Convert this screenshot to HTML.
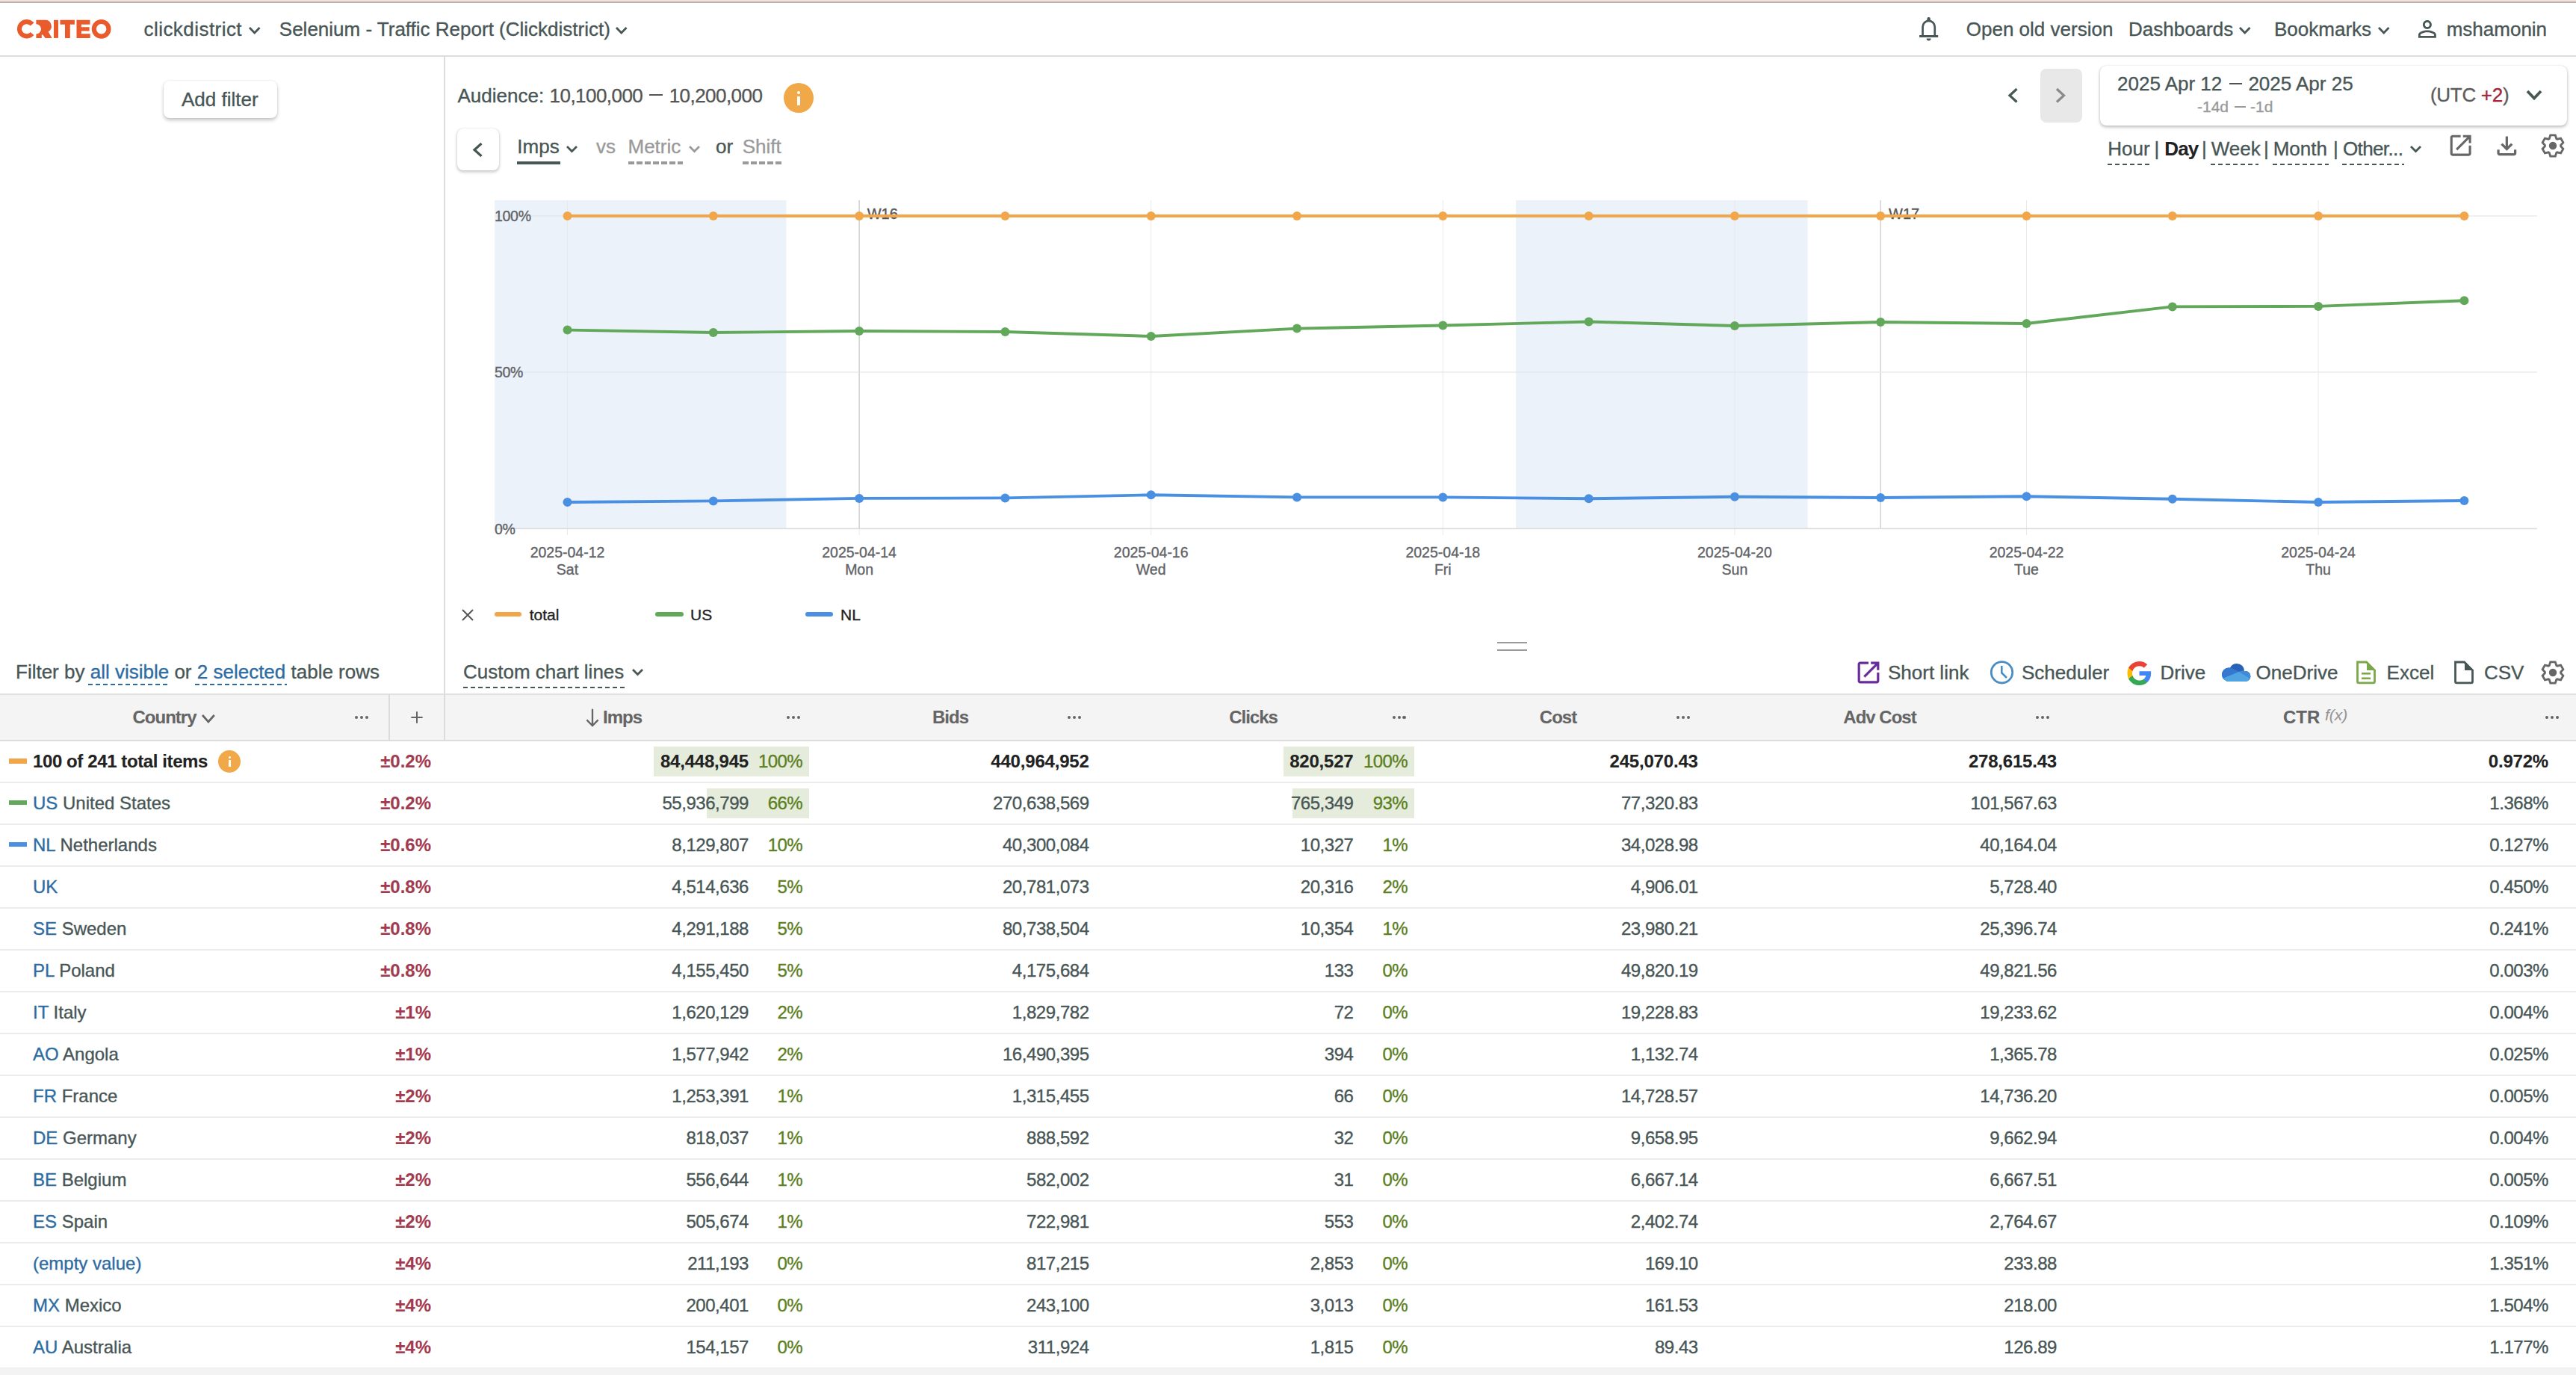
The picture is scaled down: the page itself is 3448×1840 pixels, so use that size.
<!DOCTYPE html>
<html><head><meta charset="utf-8"><title>Criteo report</title>
<style>
html,body{margin:0;padding:0;background:#fff;}
body{width:3448px;height:1840px;overflow:hidden;position:relative;font-family:"Liberation Sans",sans-serif;}
.t{position:absolute;white-space:nowrap;-webkit-text-stroke:0.35px currentColor;}
.r{position:absolute;}
b{font-weight:700}
@media (max-width: 2600px) { html{zoom:0.5;} }
</style></head><body>
<div class="r" style="left:0.00px;top:0.00px;width:3448.00px;height:2.00px;background:#f3e3dd;"></div><div class="r" style="left:0.00px;top:2.00px;width:3448.00px;height:2.00px;background:#bdb1ad;"></div><div class="r" style="left:0.00px;top:74.00px;width:3448.00px;height:2.00px;background:#dcdcdc;"></div><svg class="r" style="left:0.00px;top:0.00px" width="160" height="76" viewBox="0 0 160 76"><path fill="#e95b2a" d="M45.4,30.6 A12.7,12.7 0 1 0 45.4,46.9 L40.7,42.9 A6.6,6.6 0 1 1 40.7,34.6 Z"/><path fill="#e95b2a" d="M48.4,26.8 H60 A8.3,8.3 0 0 1 64.6,42.3 L69.6,50.9 H60.6 L57.4,46.6 H55.8 V50.9 H48.4 V45.5 A6.65,6.65 0 0 0 48.4,32.2 Z"/><rect fill="#e95b2a" x="72" y="26.8" width="6" height="24.1"/><path fill="#e95b2a" d="M80.5,26.8 H99.9 V32.8 H93.8 V50.9 H87 V32.8 H80.5 Z"/><path fill="#e95b2a" d="M102.5,26.8 H120.5 V32.8 H108.9 V36.3 H119.6 V41.5 H108.9 V45.3 H120.7 V50.9 H102.5 Z"/><path fill="#e95b2a" fill-rule="evenodd" d="M135.65,25.9 A12.9,12.9 0 1 1 135.65,51.7 A12.9,12.9 0 1 1 135.65,25.9 Z M135.65,32.1 A6.75,6.75 0 1 0 135.65,45.6 A6.75,6.75 0 1 0 135.65,32.1 Z"/></svg><div class="t" style="top:25.99px;font-size:26px;line-height:26px;color:#485656;letter-spacing:0.45px;left:192.50px;">clickdistrict</div><svg class="r" style="left:330.95px;top:33.80px" width="19.5" height="13" viewBox="0 0 19.5 13"><polyline points="3,3 9.75,10 16.5,3" fill="none" stroke="#485656" stroke-width="2.8" /></svg><div class="t" style="top:25.99px;font-size:26px;line-height:26px;color:#485656;left:373.80px;">Selenium - Traffic Report (Clickdistrict)</div><svg class="r" style="left:821.95px;top:33.80px" width="19.5" height="13" viewBox="0 0 19.5 13"><polyline points="3,3 9.75,10 16.5,3" fill="none" stroke="#485656" stroke-width="2.8" /></svg><svg class="r" style="left:2560.00px;top:15.00px" width="50" height="50" viewBox="2560 15 50 50"><rect x="2569.1" y="47" width="25.1" height="3" fill="#485656"/><path d="M2573.55,47.5 V36 A8.1,8.1 0 0 1 2589.75,36 V47.5" fill="none" stroke="#485656" stroke-width="2.7"/><rect x="2579.4" y="23" width="4.4" height="6" rx="2" fill="#485656"/><path d="M2578.6,51.5 H2584.6 A3,3 0 0 1 2578.6,51.5 Z" fill="#485656"/></svg><div class="t" style="top:25.79px;font-size:26px;line-height:26px;color:#485656;left:2631.80px;">Open old version</div><div class="t" style="top:25.79px;font-size:26px;line-height:26px;color:#485656;left:2849.00px;">Dashboards</div><svg class="r" style="left:2994.55px;top:33.80px" width="19.5" height="13" viewBox="0 0 19.5 13"><polyline points="3,3 9.75,10 16.5,3" fill="none" stroke="#485656" stroke-width="2.8" /></svg><div class="t" style="top:25.79px;font-size:26px;line-height:26px;color:#485656;left:3044.00px;">Bookmarks</div><svg class="r" style="left:3180.75px;top:33.80px" width="19.5" height="13" viewBox="0 0 19.5 13"><polyline points="3,3 9.75,10 16.5,3" fill="none" stroke="#485656" stroke-width="2.8" /></svg><svg class="r" style="left:3231px;top:21px" width="35.8" height="35.8" viewBox="0 0 24 24"><path fill="#485656" d="M12 5.9c1.16 0 2.1.94 2.1 2.1s-.94 2.1-2.1 2.1S9.9 9.16 9.9 8s.94-2.1 2.1-2.1m0 9c2.97 0 6.1 1.46 6.1 2.1v1.1H5.9V17c0-.64 3.13-2.1 6.1-2.1M12 4C9.79 4 8 5.79 8 8s1.79 4 4 4 4-1.79 4-4-1.79-4-4-4zm0 9c-2.67 0-8 1.34-8 4v3h16v-3c0-2.66-5.33-4-8-4z"/></svg><div class="t" style="top:25.79px;font-size:26px;line-height:26px;color:#485656;left:3274.70px;">mshamonin</div><div class="r" style="left:594.00px;top:76.00px;width:2.00px;height:915.00px;background:#dcdcdc;"></div><div class="r" style="left:219px;top:108px;width:152px;height:50px;border-radius:8px;background:#fff;box-shadow:0 3px 5px rgba(0,0,0,0.22),0 0 2px rgba(0,0,0,0.12)"></div><div class="t" style="top:119.69px;font-size:26px;line-height:26px;color:#485656;left:243.00px;">Add filter</div><div class="t" style="top:114.99px;font-size:26px;line-height:26px;color:#485656;left:612.50px;">Audience:</div><div class="t" style="top:114.99px;font-size:26px;line-height:26px;color:#555;letter-spacing:-0.55px;left:735.60px;">10,100,000</div><div class="r" style="left:869.20px;top:126.30px;width:17.50px;height:2.00px;background:#555;"></div><div class="t" style="top:114.99px;font-size:26px;line-height:26px;color:#555;letter-spacing:-0.55px;left:895.70px;">10,200,000</div><div class="r" style="left:1049px;top:111px;width:40px;height:40px;border-radius:50%;background:#f0a848"></div><div class="r" style="left:1067px;top:122px;width:4px;height:4px;border-radius:2px;background:#fff"></div><div class="r" style="left:1067.00px;top:129.00px;width:4.00px;height:12.00px;background:#fff;"></div><div class="r" style="left:612px;top:172px;width:56px;height:56px;border-radius:8px;background:#fff;box-shadow:0 2px 4px rgba(0,0,0,0.25),0 0 1px rgba(0,0,0,0.2)"></div><svg class="r" style="left:631.85px;top:188.50px" width="15.5" height="23" viewBox="0 0 15.5 23"><polyline points="12.5,3 3,11.5 12.5,20" fill="none" stroke="#485656" stroke-width="3.2" /></svg><div class="t" style="top:182.99px;font-size:26px;line-height:26px;color:#485656;left:692.30px;">Imps</div><div class="r" style="left:692.00px;top:216.00px;width:58.00px;height:4.00px;background:#485656;"></div><svg class="r" style="left:756.30px;top:193.35px" width="19" height="12.5" viewBox="0 0 19 12.5"><polyline points="3,3 9.5,9.5 16,3" fill="none" stroke="#485656" stroke-width="2.8" /></svg><div class="t" style="top:182.99px;font-size:26px;line-height:26px;color:#9a9a9a;left:798.00px;">vs</div><div class="t" style="top:182.99px;font-size:26px;line-height:26px;color:#9a9a9a;left:840.50px;">Metric</div><div class="r" style="left:840.50px;top:216.00px;width:73.50px;height:4px;background:repeating-linear-gradient(90deg,#9a9a9a 0 8px,transparent 8px 11px)"></div><svg class="r" style="left:920.30px;top:193.35px" width="19" height="12.5" viewBox="0 0 19 12.5"><polyline points="3,3 9.5,9.5 16,3" fill="none" stroke="#9a9a9a" stroke-width="2.8" /></svg><div class="t" style="top:182.99px;font-size:26px;line-height:26px;color:#485656;left:958.00px;">or</div><div class="t" style="top:182.99px;font-size:26px;line-height:26px;color:#9a9a9a;left:993.70px;">Shift</div><div class="r" style="left:993.70px;top:216.00px;width:52.30px;height:4px;background:repeating-linear-gradient(90deg,#9a9a9a 0 8px,transparent 8px 11px)"></div><svg class="r" style="left:2686.75px;top:116.25px" width="15.5" height="23.5" viewBox="0 0 15.5 23.5"><polyline points="12.5,3 3,11.75 12.5,20.5" fill="none" stroke="#485656" stroke-width="3.2" /></svg><div class="r" style="left:2731px;top:92px;width:56px;height:72px;border-radius:8px;background:#e8e8e8"></div><svg class="r" style="left:2750.25px;top:116.25px" width="15.5" height="23.5" viewBox="0 0 15.5 23.5"><polyline points="3,3 12.5,11.75 3,20.5" fill="none" stroke="#878b8b" stroke-width="3.2" /></svg><div class="r" style="left:2811px;top:88px;width:625px;height:80px;border-radius:8px;background:#fff;box-shadow:0 2px 4px rgba(0,0,0,0.28),0 0 1px rgba(0,0,0,0.18)"></div><div class="t" style="top:98.99px;font-size:26px;line-height:26px;color:#485656;left:2834.00px;">2025 Apr 12</div><div class="r" style="left:2983.70px;top:110.80px;width:17.10px;height:2.00px;background:#485656;"></div><div class="t" style="top:98.99px;font-size:26px;line-height:26px;color:#485656;left:3009.40px;">2025 Apr 25</div><div class="t" style="top:132.22px;font-size:21px;line-height:21px;color:#9a9a9a;left:2941.00px;">-14d</div><div class="r" style="left:2991.00px;top:142.00px;width:14.50px;height:1.60px;background:#9a9a9a;"></div><div class="t" style="top:132.22px;font-size:21px;line-height:21px;color:#9a9a9a;left:3012.00px;">-1d</div><div class="t" style="top:113.79px;font-size:26px;line-height:26px;color:#5c5c5c;letter-spacing:-0.3px;left:3253.00px;">(UTC <span style="color:#a3253a">+2</span>)</div><svg class="r" style="left:3380.00px;top:119.25px" width="24" height="15.5" viewBox="0 0 24 15.5"><polyline points="3,3 12.0,12.5 21,3" fill="none" stroke="#485656" stroke-width="3.8" /></svg><div class="t" style="top:185.69px;font-size:26px;line-height:26px;color:#485656;left:2821.20px;">Hour</div><div class="t" style="top:185.69px;font-size:26px;line-height:26px;color:#485656;left:2883.50px;">|</div><div class="t" style="top:185.69px;font-size:26px;line-height:26px;color:#485656;left:2947.00px;">|</div><div class="t" style="top:185.69px;font-size:26px;line-height:26px;color:#485656;left:2959.80px;">Week</div><div class="t" style="top:185.69px;font-size:26px;line-height:26px;color:#485656;left:3029.90px;">|</div><div class="t" style="top:185.69px;font-size:26px;line-height:26px;color:#485656;left:3042.70px;">Month</div><div class="t" style="top:185.69px;font-size:26px;line-height:26px;color:#485656;left:3123.10px;">|</div><div class="t" style="top:185.69px;font-size:26px;line-height:26px;color:#485656;letter-spacing:-0.6px;left:3135.90px;">Other...</div><div class="t" style="top:185.69px;font-size:26px;line-height:26px;color:#222;font-weight:700;-webkit-text-stroke:0.1px currentColor;letter-spacing:-0.8px;left:2897.20px;">Day</div><div class="r" style="left:2821.00px;top:218.80px;width:56.00px;height:2px;background:repeating-linear-gradient(90deg,#485656 0 6px,transparent 6px 10px)"></div><div class="r" style="left:2959.00px;top:218.80px;width:64.00px;height:2px;background:repeating-linear-gradient(90deg,#485656 0 6px,transparent 6px 10px)"></div><div class="r" style="left:3042.00px;top:218.80px;width:75.00px;height:2px;background:repeating-linear-gradient(90deg,#485656 0 6px,transparent 6px 10px)"></div><div class="r" style="left:3135.00px;top:218.80px;width:83.00px;height:2px;background:repeating-linear-gradient(90deg,#485656 0 6px,transparent 6px 10px)"></div><svg class="r" style="left:3224.30px;top:193.25px" width="19" height="12.5" viewBox="0 0 19 12.5"><polyline points="3,3 9.5,9.5 16,3" fill="none" stroke="#485656" stroke-width="2.8" /></svg><svg class="r" style="left:3274.5px;top:176px" width="37.3" height="37.3" viewBox="0 0 24 24"><path fill="#666666" d="M19 19H5V5h7V3H5c-1.11 0-2 .9-2 2v14c0 1.1.89 2 2 2h14c1.1 0 2-.9 2-2v-7h-2v7zM14 3v2h3.59l-9.83 9.83 1.41 1.41L19 6.41V10h2V3h-7z"/></svg><svg class="r" style="left:3335.5px;top:175.5px" width="38.7" height="38.7" viewBox="0 -960 960 960"><path fill="#666666" d="M480-320 280-520l56-58 104 104v-326h80v326l104-104 56 58-200 200ZM240-160q-33 0-56.5-23.5T160-240v-120h80v120h480v-120h80v120q0 33-23.5 56.5T720-160H240Z"/></svg><svg class="r" style="left:3397.00px;top:175.00px" width="40" height="40" viewBox="0 0 40 40"><path d="M15.27,10.51 L16.73,5.87 L23.27,5.87 L24.73,10.51 L25.85,11.16 L30.60,10.10 L33.87,15.77 L30.58,19.35 L30.58,20.65 L33.87,24.23 L30.60,29.90 L25.85,28.84 L24.73,29.49 L23.27,34.13 L16.73,34.13 L15.27,29.49 L14.15,28.84 L9.40,29.90 L6.13,24.23 L9.42,20.65 L9.42,19.35 L6.13,15.77 L9.40,10.10 L14.15,11.16 Z" fill="none" stroke="#666666" stroke-width="2.8" stroke-linejoin="miter"/><circle cx="20" cy="20" r="5.2" fill="#666666"/></svg><svg class="r" style="left:0.00px;top:0.00px" width="3448" height="900" viewBox="0 0 3448 900"><rect x="662" y="268" width="390.4" height="439.4" fill="#ebf2fa"/><rect x="2029" y="268" width="390.6" height="439.4" fill="#ebf2fa"/><rect x="759.00" y="268" width="1" height="448" fill="#e8e9eb"/><rect x="1149.60" y="268" width="1" height="448" fill="#e8e9eb"/><rect x="1540.20" y="268" width="1" height="448" fill="#e8e9eb"/><rect x="1930.80" y="268" width="1" height="448" fill="#e8e9eb"/><rect x="2321.40" y="268" width="1" height="448" fill="#e8e9eb"/><rect x="2712.00" y="268" width="1" height="448" fill="#e8e9eb"/><rect x="3102.60" y="268" width="1" height="448" fill="#e8e9eb"/><rect x="1149.50" y="268" width="1.2" height="439.5" fill="#c9c9c9"/><rect x="2516.60" y="268" width="1.2" height="439.5" fill="#c9c9c9"/><rect x="662" y="288.4" width="2734" height="1.2" fill="#e4e6e8"/><rect x="662" y="497.4" width="2734" height="1.2" fill="#e4e6e8"/><rect x="662" y="706.6" width="2734" height="1.6" fill="#dcdcdc"/></svg><div class="t" style="top:275.87px;font-size:20px;line-height:20px;color:#555;left:1160.70px;">W16</div><div class="t" style="top:275.87px;font-size:20px;line-height:20px;color:#555;left:2528.00px;">W17</div><svg class="r" style="left:0.00px;top:0.00px" width="3448" height="900" viewBox="0 0 3448 900"><polyline points="759.5,672.0 954.8,670.4 1150.1,666.9 1345.4,666.4 1540.7,662.3 1736.0,665.4 1931.3,665.4 2126.6,667.2 2321.9,664.8 2517.2,666.0 2712.5,664.2 2907.8,667.8 3103.1,672.0 3298.4,670.0" fill="none" stroke="#4a90e2" stroke-width="3.9" stroke-linejoin="round"/><circle cx="759.5" cy="672.0" r="6" fill="#4a90e2"/><circle cx="954.8" cy="670.4" r="6" fill="#4a90e2"/><circle cx="1150.1" cy="666.9" r="6" fill="#4a90e2"/><circle cx="1345.4" cy="666.4" r="6" fill="#4a90e2"/><circle cx="1540.7" cy="662.3" r="6" fill="#4a90e2"/><circle cx="1736.0" cy="665.4" r="6" fill="#4a90e2"/><circle cx="1931.3" cy="665.4" r="6" fill="#4a90e2"/><circle cx="2126.6" cy="667.2" r="6" fill="#4a90e2"/><circle cx="2321.9" cy="664.8" r="6" fill="#4a90e2"/><circle cx="2517.2" cy="666.0" r="6" fill="#4a90e2"/><circle cx="2712.5" cy="664.2" r="6" fill="#4a90e2"/><circle cx="2907.8" cy="667.8" r="6" fill="#4a90e2"/><circle cx="3103.1" cy="672.0" r="6" fill="#4a90e2"/><circle cx="3298.4" cy="670.0" r="6" fill="#4a90e2"/><polyline points="759.5,441.6 954.8,445.0 1150.1,443.0 1345.4,444.0 1540.7,450.0 1736.0,439.6 1931.3,435.5 2126.6,430.5 2321.9,436.0 2517.2,431.0 2712.5,433.0 2907.8,410.4 3103.1,409.9 3298.4,402.3" fill="none" stroke="#62a85a" stroke-width="3.9" stroke-linejoin="round"/><circle cx="759.5" cy="441.6" r="6" fill="#62a85a"/><circle cx="954.8" cy="445.0" r="6" fill="#62a85a"/><circle cx="1150.1" cy="443.0" r="6" fill="#62a85a"/><circle cx="1345.4" cy="444.0" r="6" fill="#62a85a"/><circle cx="1540.7" cy="450.0" r="6" fill="#62a85a"/><circle cx="1736.0" cy="439.6" r="6" fill="#62a85a"/><circle cx="1931.3" cy="435.5" r="6" fill="#62a85a"/><circle cx="2126.6" cy="430.5" r="6" fill="#62a85a"/><circle cx="2321.9" cy="436.0" r="6" fill="#62a85a"/><circle cx="2517.2" cy="431.0" r="6" fill="#62a85a"/><circle cx="2712.5" cy="433.0" r="6" fill="#62a85a"/><circle cx="2907.8" cy="410.4" r="6" fill="#62a85a"/><circle cx="3103.1" cy="409.9" r="6" fill="#62a85a"/><circle cx="3298.4" cy="402.3" r="6" fill="#62a85a"/><polyline points="759.5,289.0 954.8,289.0 1150.1,289.0 1345.4,289.0 1540.7,289.0 1736.0,289.0 1931.3,289.0 2126.6,289.0 2321.9,289.0 2517.2,289.0 2712.5,289.0 2907.8,289.0 3103.1,289.0 3298.4,289.0" fill="none" stroke="#f2a64a" stroke-width="3.9" stroke-linejoin="round"/><circle cx="759.5" cy="289.0" r="6" fill="#f2a64a"/><circle cx="954.8" cy="289.0" r="6" fill="#f2a64a"/><circle cx="1150.1" cy="289.0" r="6" fill="#f2a64a"/><circle cx="1345.4" cy="289.0" r="6" fill="#f2a64a"/><circle cx="1540.7" cy="289.0" r="6" fill="#f2a64a"/><circle cx="1736.0" cy="289.0" r="6" fill="#f2a64a"/><circle cx="1931.3" cy="289.0" r="6" fill="#f2a64a"/><circle cx="2126.6" cy="289.0" r="6" fill="#f2a64a"/><circle cx="2321.9" cy="289.0" r="6" fill="#f2a64a"/><circle cx="2517.2" cy="289.0" r="6" fill="#f2a64a"/><circle cx="2712.5" cy="289.0" r="6" fill="#f2a64a"/><circle cx="2907.8" cy="289.0" r="6" fill="#f2a64a"/><circle cx="3103.1" cy="289.0" r="6" fill="#f2a64a"/><circle cx="3298.4" cy="289.0" r="6" fill="#f2a64a"/></svg><div class="t" style="top:279.99px;font-size:19.5px;line-height:19.5px;color:#5f6368;letter-spacing:-0.3px;left:662.00px;">100%</div><div class="t" style="top:489.49px;font-size:19.5px;line-height:19.5px;color:#5f6368;letter-spacing:-0.3px;left:662.00px;">50%</div><div class="t" style="top:698.99px;font-size:19.5px;line-height:19.5px;color:#5f6368;letter-spacing:-0.3px;left:662.00px;">0%</div><div class="t" style="top:730.29px;font-size:19.5px;line-height:19.5px;color:#5f6368;left:159.50px;width:1200px;text-align:center;">2025-04-12</div><div class="t" style="top:753.49px;font-size:19.5px;line-height:19.5px;color:#5f6368;left:159.50px;width:1200px;text-align:center;">Sat</div><div class="t" style="top:730.29px;font-size:19.5px;line-height:19.5px;color:#5f6368;left:550.10px;width:1200px;text-align:center;">2025-04-14</div><div class="t" style="top:753.49px;font-size:19.5px;line-height:19.5px;color:#5f6368;left:550.10px;width:1200px;text-align:center;">Mon</div><div class="t" style="top:730.29px;font-size:19.5px;line-height:19.5px;color:#5f6368;left:940.70px;width:1200px;text-align:center;">2025-04-16</div><div class="t" style="top:753.49px;font-size:19.5px;line-height:19.5px;color:#5f6368;left:940.70px;width:1200px;text-align:center;">Wed</div><div class="t" style="top:730.29px;font-size:19.5px;line-height:19.5px;color:#5f6368;left:1331.30px;width:1200px;text-align:center;">2025-04-18</div><div class="t" style="top:753.49px;font-size:19.5px;line-height:19.5px;color:#5f6368;left:1331.30px;width:1200px;text-align:center;">Fri</div><div class="t" style="top:730.29px;font-size:19.5px;line-height:19.5px;color:#5f6368;left:1721.90px;width:1200px;text-align:center;">2025-04-20</div><div class="t" style="top:753.49px;font-size:19.5px;line-height:19.5px;color:#5f6368;left:1721.90px;width:1200px;text-align:center;">Sun</div><div class="t" style="top:730.29px;font-size:19.5px;line-height:19.5px;color:#5f6368;left:2112.50px;width:1200px;text-align:center;">2025-04-22</div><div class="t" style="top:753.49px;font-size:19.5px;line-height:19.5px;color:#5f6368;left:2112.50px;width:1200px;text-align:center;">Tue</div><div class="t" style="top:730.29px;font-size:19.5px;line-height:19.5px;color:#5f6368;left:2503.10px;width:1200px;text-align:center;">2025-04-24</div><div class="t" style="top:753.49px;font-size:19.5px;line-height:19.5px;color:#5f6368;left:2503.10px;width:1200px;text-align:center;">Thu</div><svg class="r" style="left:616.00px;top:813.00px" width="20" height="20" viewBox="0 0 20 20"><path d="M3,3 L17,17 M17,3 L3,17" stroke="#555" stroke-width="2"/></svg><div class="r" style="left:662px;top:819px;width:36px;height:6px;border-radius:3px;background:#f2a64a"></div><div class="t" style="top:811.52px;font-size:21px;line-height:21px;color:#222;left:708.70px;">total</div><div class="r" style="left:877px;top:819px;width:38px;height:6px;border-radius:3px;background:#62a85a"></div><div class="t" style="top:811.52px;font-size:21px;line-height:21px;color:#222;left:924.00px;">US</div><div class="r" style="left:1078px;top:819px;width:37px;height:6px;border-radius:3px;background:#4a90e2"></div><div class="t" style="top:811.52px;font-size:21px;line-height:21px;color:#222;left:1125.00px;">NL</div><div class="r" style="left:2004.00px;top:859.00px;width:40.00px;height:1.50px;background:#9a9a9a;"></div><div class="r" style="left:2004.00px;top:869.00px;width:40.00px;height:1.50px;background:#9a9a9a;"></div><div class="t" style="top:885.99px;font-size:26px;line-height:26px;color:#485656;left:21.00px;">Filter by <span style="color:#2d6ca2">all visible</span> or <span style="color:#2d6ca2">2 selected</span> table rows</div><div class="r" style="left:118.00px;top:915.00px;width:106.00px;height:2px;background:repeating-linear-gradient(90deg,#2d6ca2 0 6px,transparent 6px 10px)"></div><div class="r" style="left:261.00px;top:915.00px;width:122.50px;height:2px;background:repeating-linear-gradient(90deg,#2d6ca2 0 6px,transparent 6px 10px)"></div><div class="t" style="top:885.99px;font-size:26px;line-height:26px;color:#485656;left:620.00px;">Custom chart lines</div><div class="r" style="left:620.00px;top:918.50px;width:218.00px;height:2px;background:repeating-linear-gradient(90deg,#485656 0 6px,transparent 6px 10px)"></div><svg class="r" style="left:843.80px;top:893.25px" width="19" height="12.5" viewBox="0 0 19 12.5"><polyline points="3,3 9.5,9.5 16,3" fill="none" stroke="#485656" stroke-width="2.8" /></svg><svg class="r" style="left:2481.00px;top:880.00px" width="40" height="40" viewBox="0 0 40 40"><g transform="translate(20,20) scale(1.6) translate(-12,-12)"><path fill="#6a2c9c" d="M19 19H5V5h7V3H5c-1.11 0-2 .9-2 2v14c0 1.1.89 2 2 2h14c1.1 0 2-.9 2-2v-7h-2v7zM14 3v2h3.59l-9.83 9.83 1.41 1.41L19 6.41V10h2V3h-7z"/></g></svg><div class="t" style="top:886.99px;font-size:26px;line-height:26px;color:#485656;left:2527.00px;">Short link</div><svg class="r" style="left:2660.00px;top:880.00px" width="40" height="40" viewBox="0 0 40 40"><circle cx="19.5" cy="19.8" r="14.2" fill="none" stroke="#4a8cc4" stroke-width="2.8"/><polyline points="19.3,11 19.3,20.5 26,27" fill="none" stroke="#4a8cc4" stroke-width="2.6"/></svg><div class="t" style="top:886.99px;font-size:26px;line-height:26px;color:#485656;left:2706.00px;">Scheduler</div><svg class="r" style="left:0.00px;top:0.00px" width="3448" height="1000" viewBox="0 0 3448 1000"><g transform="translate(2847.5,885) scale(0.667)"><path fill="#4285F4" d="M47.5 24.5c0-1.6-.1-3.1-.4-4.5H24v8.5h13.2c-.6 3-2.3 5.6-4.9 7.3v6h7.9c4.6-4.2 7.3-10.5 7.3-17.3z"/><path fill="#34A853" d="M24 48c6.5 0 12-2.2 16-5.9l-7.9-6c-2.2 1.5-5 2.3-8.1 2.3-6.3 0-11.6-4.2-13.5-9.9H2.3v6.2C6.3 42.6 14.5 48 24 48z"/><path fill="#FBBC05" d="M10.5 28.5c-.5-1.5-.8-3-.8-4.5s.3-3.1.8-4.5v-6.2H2.3C.8 16.4 0 20.1 0 24s.8 7.6 2.3 10.7l8.2-6.2z"/><path fill="#EA4335" d="M24 9.5c3.5 0 6.7 1.2 9.2 3.6l6.9-6.9C35.9 2.4 30.5 0 24 0 14.5 0 6.3 5.4 2.3 13.3l8.2 6.2C12.4 13.7 17.7 9.5 24 9.5z"/></g></svg><div class="t" style="top:886.99px;font-size:26px;line-height:26px;color:#485656;left:2891.50px;">Drive</div><svg class="r" style="left:0.00px;top:0.00px" width="3448" height="1000" viewBox="0 0 3448 1000"><defs><clipPath id="odc"><circle cx="2983" cy="902.6" r="9"/><circle cx="2994" cy="898" r="10.1"/><circle cx="3005.5" cy="905" r="6.9"/><rect x="2980" y="900" width="26" height="11.9"/></clipPath></defs><g clip-path="url(#odc)"><rect x="2960" y="880" width="60" height="40" fill="#2962b8"/><polygon points="2960,881.2 2997,898.8 2960,914" fill="#3478d0"/><polygon points="2997,898.8 3020,892.9 3020,912.9" fill="#3f8cd8"/><polygon points="2960,914 2997,898.8 3020,912.9 3020,920 2960,920" fill="#50a4e2"/></g></svg><div class="t" style="top:886.99px;font-size:26px;line-height:26px;color:#485656;left:3019.60px;">OneDrive</div><svg class="r" style="left:0.00px;top:0.00px" width="3448" height="1000" viewBox="0 0 3448 1000"><path d="M3155.5,886 H3167.5 L3178.5,897 V912 A1.8,1.8 0 0 1 3176.7,913.8 H3157.3 A1.8,1.8 0 0 1 3155.5,912 Z" fill="none" stroke="#7aa84a" stroke-width="2.8"/><path d="M3168,885 L3180,897 H3168 Z" fill="#7aa84a"/><rect x="3161" y="900" width="12" height="2.6" fill="#7aa84a"/><rect x="3161" y="906.5" width="12" height="2.6" fill="#7aa84a"/></svg><div class="t" style="top:886.99px;font-size:26px;line-height:26px;color:#485656;left:3194.60px;">Excel</div><svg class="r" style="left:0.00px;top:0.00px" width="3448" height="1000" viewBox="0 0 3448 1000"><path d="M3286.5,886 H3298.5 L3309.5,897 V912 A1.8,1.8 0 0 1 3307.7,913.8 H3288.3 A1.8,1.8 0 0 1 3286.5,912 Z" fill="none" stroke="#485656" stroke-width="2.8"/><path d="M3299,885 L3311,897 H3299 Z" fill="#485656"/></svg><div class="t" style="top:886.99px;font-size:26px;line-height:26px;color:#485656;left:3325.00px;">CSV</div><svg class="r" style="left:3397.00px;top:879.50px" width="40" height="40" viewBox="0 0 40 40"><path d="M15.27,10.51 L16.73,5.87 L23.27,5.87 L24.73,10.51 L25.85,11.16 L30.60,10.10 L33.87,15.77 L30.58,19.35 L30.58,20.65 L33.87,24.23 L30.60,29.90 L25.85,28.84 L24.73,29.49 L23.27,34.13 L16.73,34.13 L15.27,29.49 L14.15,28.84 L9.40,29.90 L6.13,24.23 L9.42,20.65 L9.42,19.35 L6.13,15.77 L9.40,10.10 L14.15,11.16 Z" fill="none" stroke="#666666" stroke-width="2.8" stroke-linejoin="miter"/><circle cx="20" cy="20" r="5.2" fill="#666666"/></svg><div class="r" style="left:0.00px;top:929.00px;width:3448.00px;height:62.00px;background:#f4f4f4;"></div><div class="r" style="left:0.00px;top:928.00px;width:3448.00px;height:2.00px;background:#e0e0e0;"></div><div class="r" style="left:0.00px;top:990.00px;width:3448.00px;height:2.00px;background:#dcdcdc;"></div><div class="r" style="left:520.00px;top:929.00px;width:2.00px;height:62.00px;background:#dcdcdc;"></div><div class="r" style="left:594.00px;top:929.00px;width:2.00px;height:62.00px;background:#dcdcdc;"></div><div class="t" style="top:948.28px;font-size:24px;line-height:24px;color:#656565;font-weight:700;-webkit-text-stroke:0.1px currentColor;letter-spacing:-1px;left:177.50px;">Country</div><svg class="r" style="left:268.10px;top:953.70px" width="21.8" height="15" viewBox="0 0 21.8 15"><polyline points="3,3 10.9,12 18.8,3" fill="none" stroke="#656565" stroke-width="2.7" /></svg><div class="r" style="left:475.0px;top:957.6px;width:4.4px;height:4.4px;border-radius:50%;background:#656565"></div><div class="r" style="left:481.8px;top:957.6px;width:4.4px;height:4.4px;border-radius:50%;background:#656565"></div><div class="r" style="left:488.6px;top:957.6px;width:4.4px;height:4.4px;border-radius:50%;background:#656565"></div><svg class="r" style="left:546.20px;top:947.80px" width="24" height="24" viewBox="0 0 24 24"><path d="M12,4.3 V19.7 M4.3,12 H19.7" stroke="#656565" stroke-width="2"/></svg><svg class="r" style="left:781.60px;top:945.00px" width="24" height="34" viewBox="0 0 24 34"><path d="M11,3.7 V25.5 M3.4,18.4 L11,26 L18.6,18.4" fill="none" stroke="#656565" stroke-width="2.3"/></svg><div class="t" style="top:948.28px;font-size:24px;line-height:24px;color:#656565;font-weight:700;-webkit-text-stroke:0.1px currentColor;letter-spacing:-1px;left:807.00px;">Imps</div><div class="r" style="left:1053.0px;top:957.6px;width:4.4px;height:4.4px;border-radius:50%;background:#656565"></div><div class="r" style="left:1059.8px;top:957.6px;width:4.4px;height:4.4px;border-radius:50%;background:#656565"></div><div class="r" style="left:1066.6px;top:957.6px;width:4.4px;height:4.4px;border-radius:50%;background:#656565"></div><div class="t" style="top:948.28px;font-size:24px;line-height:24px;color:#656565;font-weight:700;-webkit-text-stroke:0.1px currentColor;letter-spacing:-1px;left:672.00px;width:1200px;text-align:center;">Bids</div><div class="r" style="left:1429.0px;top:957.6px;width:4.4px;height:4.4px;border-radius:50%;background:#656565"></div><div class="r" style="left:1435.8px;top:957.6px;width:4.4px;height:4.4px;border-radius:50%;background:#656565"></div><div class="r" style="left:1442.6px;top:957.6px;width:4.4px;height:4.4px;border-radius:50%;background:#656565"></div><div class="t" style="top:948.28px;font-size:24px;line-height:24px;color:#656565;font-weight:700;-webkit-text-stroke:0.1px currentColor;letter-spacing:-1px;left:1077.50px;width:1200px;text-align:center;">Clicks</div><div class="r" style="left:1863.7px;top:957.6px;width:4.4px;height:4.4px;border-radius:50%;background:#656565"></div><div class="r" style="left:1870.5px;top:957.6px;width:4.4px;height:4.4px;border-radius:50%;background:#656565"></div><div class="r" style="left:1877.3px;top:957.6px;width:4.4px;height:4.4px;border-radius:50%;background:#656565"></div><div class="t" style="top:948.28px;font-size:24px;line-height:24px;color:#656565;font-weight:700;-webkit-text-stroke:0.1px currentColor;letter-spacing:-1px;left:1485.50px;width:1200px;text-align:center;">Cost</div><div class="r" style="left:2244.0px;top:957.6px;width:4.4px;height:4.4px;border-radius:50%;background:#656565"></div><div class="r" style="left:2250.8px;top:957.6px;width:4.4px;height:4.4px;border-radius:50%;background:#656565"></div><div class="r" style="left:2257.6px;top:957.6px;width:4.4px;height:4.4px;border-radius:50%;background:#656565"></div><div class="t" style="top:948.28px;font-size:24px;line-height:24px;color:#656565;font-weight:700;-webkit-text-stroke:0.1px currentColor;letter-spacing:-1px;left:1916.00px;width:1200px;text-align:center;">Adv Cost</div><div class="r" style="left:2725.0px;top:957.6px;width:4.4px;height:4.4px;border-radius:50%;background:#656565"></div><div class="r" style="left:2731.8px;top:957.6px;width:4.4px;height:4.4px;border-radius:50%;background:#656565"></div><div class="r" style="left:2738.6px;top:957.6px;width:4.4px;height:4.4px;border-radius:50%;background:#656565"></div><div class="t" style="top:948.28px;font-size:24px;line-height:24px;color:#656565;font-weight:700;-webkit-text-stroke:0.1px currentColor;left:3056.00px;">CTR <i style="font-weight:400;color:#959595;font-size:21px;position:relative;top:-4.5px;">f(x)</i></div><div class="r" style="left:3407.0px;top:957.6px;width:4.4px;height:4.4px;border-radius:50%;background:#656565"></div><div class="r" style="left:3413.8px;top:957.6px;width:4.4px;height:4.4px;border-radius:50%;background:#656565"></div><div class="r" style="left:3420.6px;top:957.6px;width:4.4px;height:4.4px;border-radius:50%;background:#656565"></div><div class="r" style="left:0.00px;top:1045.98px;width:3448.00px;height:2.00px;background:#ececec;"></div><div class="r" style="left:11.60px;top:1015.00px;width:24.40px;height:6.50px;background:#f2a64a;"></div><div class="t" style="top:1007.28px;font-size:24px;line-height:24px;color:#222;font-weight:700;-webkit-text-stroke:0.1px currentColor;letter-spacing:-0.4px;left:44.00px;">100 of 241 total items</div><div class="r" style="left:292px;top:1004.0px;width:30px;height:30px;border-radius:50%;background:#f0a848"></div><div class="r" style="left:305.5px;top:1011.5px;width:3px;height:3px;border-radius:2px;background:#fff"></div><div class="r" style="left:305.50px;top:1016.50px;width:3.00px;height:9.50px;background:#fff;"></div><div class="t" style="top:1007.28px;font-size:24px;line-height:24px;color:#a23b50;font-weight:700;-webkit-text-stroke:0.1px currentColor;left:-623.00px;width:1200px;text-align:right;">±0.2%</div><div class="r" style="left:875.00px;top:998.80px;width:208.00px;height:40.40px;background:#e5ecdb;"></div><div class="r" style="left:1718.00px;top:998.80px;width:175.00px;height:40.40px;background:#e5ecdb;"></div><div class="t" style="top:1007.28px;font-size:24px;line-height:24px;color:#222;font-weight:700;-webkit-text-stroke:0.1px currentColor;letter-spacing:-0.2px;left:-198.00px;width:1200px;text-align:right;">84,448,945</div><div class="t" style="top:1007.28px;font-size:24px;line-height:24px;color:#5b8021;letter-spacing:-0.6px;left:-126.00px;width:1200px;text-align:right;">100%</div><div class="t" style="top:1007.28px;font-size:24px;line-height:24px;color:#222;font-weight:700;-webkit-text-stroke:0.1px currentColor;letter-spacing:-0.2px;left:257.60px;width:1200px;text-align:right;">440,964,952</div><div class="t" style="top:1007.28px;font-size:24px;line-height:24px;color:#222;font-weight:700;-webkit-text-stroke:0.1px currentColor;letter-spacing:-0.2px;left:611.50px;width:1200px;text-align:right;">820,527</div><div class="t" style="top:1007.28px;font-size:24px;line-height:24px;color:#5b8021;letter-spacing:-0.6px;left:684.00px;width:1200px;text-align:right;">100%</div><div class="t" style="top:1007.28px;font-size:24px;line-height:24px;color:#222;font-weight:700;-webkit-text-stroke:0.1px currentColor;letter-spacing:-0.2px;left:1072.70px;width:1200px;text-align:right;">245,070.43</div><div class="t" style="top:1007.28px;font-size:24px;line-height:24px;color:#222;font-weight:700;-webkit-text-stroke:0.1px currentColor;letter-spacing:-0.2px;left:1553.00px;width:1200px;text-align:right;">278,615.43</div><div class="t" style="top:1007.28px;font-size:24px;line-height:24px;color:#222;font-weight:700;-webkit-text-stroke:0.1px currentColor;letter-spacing:-0.2px;left:2211.00px;width:1200px;text-align:right;">0.972%</div><div class="r" style="left:0.00px;top:1101.96px;width:3448.00px;height:2.00px;background:#ececec;"></div><div class="r" style="left:11.60px;top:1070.98px;width:24.40px;height:6.50px;background:#62a85a;"></div><div class="t" style="top:1063.26px;font-size:24px;line-height:24px;color:#485656;left:44.00px;"><span style="color:#2d6ca2">US</span> United States</div><div class="t" style="top:1063.26px;font-size:24px;line-height:24px;color:#a23b50;font-weight:700;-webkit-text-stroke:0.1px currentColor;left:-623.00px;width:1200px;text-align:right;">±0.2%</div><div class="r" style="left:945.72px;top:1054.78px;width:137.28px;height:40.40px;background:#e5ecdb;"></div><div class="r" style="left:1730.25px;top:1054.78px;width:162.75px;height:40.40px;background:#e5ecdb;"></div><div class="t" style="top:1063.26px;font-size:24px;line-height:24px;color:#485656;letter-spacing:-0.45px;left:-198.00px;width:1200px;text-align:right;">55,936,799</div><div class="t" style="top:1063.26px;font-size:24px;line-height:24px;color:#5b8021;letter-spacing:-0.6px;left:-126.00px;width:1200px;text-align:right;">66%</div><div class="t" style="top:1063.26px;font-size:24px;line-height:24px;color:#485656;letter-spacing:-0.45px;left:257.60px;width:1200px;text-align:right;">270,638,569</div><div class="t" style="top:1063.26px;font-size:24px;line-height:24px;color:#485656;letter-spacing:-0.45px;left:611.50px;width:1200px;text-align:right;">765,349</div><div class="t" style="top:1063.26px;font-size:24px;line-height:24px;color:#5b8021;letter-spacing:-0.6px;left:684.00px;width:1200px;text-align:right;">93%</div><div class="t" style="top:1063.26px;font-size:24px;line-height:24px;color:#485656;letter-spacing:-0.45px;left:1072.70px;width:1200px;text-align:right;">77,320.83</div><div class="t" style="top:1063.26px;font-size:24px;line-height:24px;color:#485656;letter-spacing:-0.45px;left:1553.00px;width:1200px;text-align:right;">101,567.63</div><div class="t" style="top:1063.26px;font-size:24px;line-height:24px;color:#485656;letter-spacing:-0.45px;left:2211.00px;width:1200px;text-align:right;">1.368%</div><div class="r" style="left:0.00px;top:1157.94px;width:3448.00px;height:2.00px;background:#ececec;"></div><div class="r" style="left:11.60px;top:1126.96px;width:24.40px;height:6.50px;background:#4a90e2;"></div><div class="t" style="top:1119.24px;font-size:24px;line-height:24px;color:#485656;left:44.00px;"><span style="color:#2d6ca2">NL</span> Netherlands</div><div class="t" style="top:1119.24px;font-size:24px;line-height:24px;color:#a23b50;font-weight:700;-webkit-text-stroke:0.1px currentColor;left:-623.00px;width:1200px;text-align:right;">±0.6%</div><div class="t" style="top:1119.24px;font-size:24px;line-height:24px;color:#485656;letter-spacing:-0.45px;left:-198.00px;width:1200px;text-align:right;">8,129,807</div><div class="t" style="top:1119.24px;font-size:24px;line-height:24px;color:#5b8021;letter-spacing:-0.6px;left:-126.00px;width:1200px;text-align:right;">10%</div><div class="t" style="top:1119.24px;font-size:24px;line-height:24px;color:#485656;letter-spacing:-0.45px;left:257.60px;width:1200px;text-align:right;">40,300,084</div><div class="t" style="top:1119.24px;font-size:24px;line-height:24px;color:#485656;letter-spacing:-0.45px;left:611.50px;width:1200px;text-align:right;">10,327</div><div class="t" style="top:1119.24px;font-size:24px;line-height:24px;color:#5b8021;letter-spacing:-0.6px;left:684.00px;width:1200px;text-align:right;">1%</div><div class="t" style="top:1119.24px;font-size:24px;line-height:24px;color:#485656;letter-spacing:-0.45px;left:1072.70px;width:1200px;text-align:right;">34,028.98</div><div class="t" style="top:1119.24px;font-size:24px;line-height:24px;color:#485656;letter-spacing:-0.45px;left:1553.00px;width:1200px;text-align:right;">40,164.04</div><div class="t" style="top:1119.24px;font-size:24px;line-height:24px;color:#485656;letter-spacing:-0.45px;left:2211.00px;width:1200px;text-align:right;">0.127%</div><div class="r" style="left:0.00px;top:1213.92px;width:3448.00px;height:2.00px;background:#ececec;"></div><div class="t" style="top:1175.22px;font-size:24px;line-height:24px;color:#485656;left:44.00px;"><span style="color:#2d6ca2">UK</span></div><div class="t" style="top:1175.22px;font-size:24px;line-height:24px;color:#a23b50;font-weight:700;-webkit-text-stroke:0.1px currentColor;left:-623.00px;width:1200px;text-align:right;">±0.8%</div><div class="t" style="top:1175.22px;font-size:24px;line-height:24px;color:#485656;letter-spacing:-0.45px;left:-198.00px;width:1200px;text-align:right;">4,514,636</div><div class="t" style="top:1175.22px;font-size:24px;line-height:24px;color:#5b8021;letter-spacing:-0.6px;left:-126.00px;width:1200px;text-align:right;">5%</div><div class="t" style="top:1175.22px;font-size:24px;line-height:24px;color:#485656;letter-spacing:-0.45px;left:257.60px;width:1200px;text-align:right;">20,781,073</div><div class="t" style="top:1175.22px;font-size:24px;line-height:24px;color:#485656;letter-spacing:-0.45px;left:611.50px;width:1200px;text-align:right;">20,316</div><div class="t" style="top:1175.22px;font-size:24px;line-height:24px;color:#5b8021;letter-spacing:-0.6px;left:684.00px;width:1200px;text-align:right;">2%</div><div class="t" style="top:1175.22px;font-size:24px;line-height:24px;color:#485656;letter-spacing:-0.45px;left:1072.70px;width:1200px;text-align:right;">4,906.01</div><div class="t" style="top:1175.22px;font-size:24px;line-height:24px;color:#485656;letter-spacing:-0.45px;left:1553.00px;width:1200px;text-align:right;">5,728.40</div><div class="t" style="top:1175.22px;font-size:24px;line-height:24px;color:#485656;letter-spacing:-0.45px;left:2211.00px;width:1200px;text-align:right;">0.450%</div><div class="r" style="left:0.00px;top:1269.90px;width:3448.00px;height:2.00px;background:#ececec;"></div><div class="t" style="top:1231.20px;font-size:24px;line-height:24px;color:#485656;left:44.00px;"><span style="color:#2d6ca2">SE</span> Sweden</div><div class="t" style="top:1231.20px;font-size:24px;line-height:24px;color:#a23b50;font-weight:700;-webkit-text-stroke:0.1px currentColor;left:-623.00px;width:1200px;text-align:right;">±0.8%</div><div class="t" style="top:1231.20px;font-size:24px;line-height:24px;color:#485656;letter-spacing:-0.45px;left:-198.00px;width:1200px;text-align:right;">4,291,188</div><div class="t" style="top:1231.20px;font-size:24px;line-height:24px;color:#5b8021;letter-spacing:-0.6px;left:-126.00px;width:1200px;text-align:right;">5%</div><div class="t" style="top:1231.20px;font-size:24px;line-height:24px;color:#485656;letter-spacing:-0.45px;left:257.60px;width:1200px;text-align:right;">80,738,504</div><div class="t" style="top:1231.20px;font-size:24px;line-height:24px;color:#485656;letter-spacing:-0.45px;left:611.50px;width:1200px;text-align:right;">10,354</div><div class="t" style="top:1231.20px;font-size:24px;line-height:24px;color:#5b8021;letter-spacing:-0.6px;left:684.00px;width:1200px;text-align:right;">1%</div><div class="t" style="top:1231.20px;font-size:24px;line-height:24px;color:#485656;letter-spacing:-0.45px;left:1072.70px;width:1200px;text-align:right;">23,980.21</div><div class="t" style="top:1231.20px;font-size:24px;line-height:24px;color:#485656;letter-spacing:-0.45px;left:1553.00px;width:1200px;text-align:right;">25,396.74</div><div class="t" style="top:1231.20px;font-size:24px;line-height:24px;color:#485656;letter-spacing:-0.45px;left:2211.00px;width:1200px;text-align:right;">0.241%</div><div class="r" style="left:0.00px;top:1325.88px;width:3448.00px;height:2.00px;background:#ececec;"></div><div class="t" style="top:1287.18px;font-size:24px;line-height:24px;color:#485656;left:44.00px;"><span style="color:#2d6ca2">PL</span> Poland</div><div class="t" style="top:1287.18px;font-size:24px;line-height:24px;color:#a23b50;font-weight:700;-webkit-text-stroke:0.1px currentColor;left:-623.00px;width:1200px;text-align:right;">±0.8%</div><div class="t" style="top:1287.18px;font-size:24px;line-height:24px;color:#485656;letter-spacing:-0.45px;left:-198.00px;width:1200px;text-align:right;">4,155,450</div><div class="t" style="top:1287.18px;font-size:24px;line-height:24px;color:#5b8021;letter-spacing:-0.6px;left:-126.00px;width:1200px;text-align:right;">5%</div><div class="t" style="top:1287.18px;font-size:24px;line-height:24px;color:#485656;letter-spacing:-0.45px;left:257.60px;width:1200px;text-align:right;">4,175,684</div><div class="t" style="top:1287.18px;font-size:24px;line-height:24px;color:#485656;letter-spacing:-0.45px;left:611.50px;width:1200px;text-align:right;">133</div><div class="t" style="top:1287.18px;font-size:24px;line-height:24px;color:#5b8021;letter-spacing:-0.6px;left:684.00px;width:1200px;text-align:right;">0%</div><div class="t" style="top:1287.18px;font-size:24px;line-height:24px;color:#485656;letter-spacing:-0.45px;left:1072.70px;width:1200px;text-align:right;">49,820.19</div><div class="t" style="top:1287.18px;font-size:24px;line-height:24px;color:#485656;letter-spacing:-0.45px;left:1553.00px;width:1200px;text-align:right;">49,821.56</div><div class="t" style="top:1287.18px;font-size:24px;line-height:24px;color:#485656;letter-spacing:-0.45px;left:2211.00px;width:1200px;text-align:right;">0.003%</div><div class="r" style="left:0.00px;top:1381.86px;width:3448.00px;height:2.00px;background:#ececec;"></div><div class="t" style="top:1343.16px;font-size:24px;line-height:24px;color:#485656;left:44.00px;"><span style="color:#2d6ca2">IT</span> Italy</div><div class="t" style="top:1343.16px;font-size:24px;line-height:24px;color:#a23b50;font-weight:700;-webkit-text-stroke:0.1px currentColor;left:-623.00px;width:1200px;text-align:right;">±1%</div><div class="t" style="top:1343.16px;font-size:24px;line-height:24px;color:#485656;letter-spacing:-0.45px;left:-198.00px;width:1200px;text-align:right;">1,620,129</div><div class="t" style="top:1343.16px;font-size:24px;line-height:24px;color:#5b8021;letter-spacing:-0.6px;left:-126.00px;width:1200px;text-align:right;">2%</div><div class="t" style="top:1343.16px;font-size:24px;line-height:24px;color:#485656;letter-spacing:-0.45px;left:257.60px;width:1200px;text-align:right;">1,829,782</div><div class="t" style="top:1343.16px;font-size:24px;line-height:24px;color:#485656;letter-spacing:-0.45px;left:611.50px;width:1200px;text-align:right;">72</div><div class="t" style="top:1343.16px;font-size:24px;line-height:24px;color:#5b8021;letter-spacing:-0.6px;left:684.00px;width:1200px;text-align:right;">0%</div><div class="t" style="top:1343.16px;font-size:24px;line-height:24px;color:#485656;letter-spacing:-0.45px;left:1072.70px;width:1200px;text-align:right;">19,228.83</div><div class="t" style="top:1343.16px;font-size:24px;line-height:24px;color:#485656;letter-spacing:-0.45px;left:1553.00px;width:1200px;text-align:right;">19,233.62</div><div class="t" style="top:1343.16px;font-size:24px;line-height:24px;color:#485656;letter-spacing:-0.45px;left:2211.00px;width:1200px;text-align:right;">0.004%</div><div class="r" style="left:0.00px;top:1437.84px;width:3448.00px;height:2.00px;background:#ececec;"></div><div class="t" style="top:1399.14px;font-size:24px;line-height:24px;color:#485656;left:44.00px;"><span style="color:#2d6ca2">AO</span> Angola</div><div class="t" style="top:1399.14px;font-size:24px;line-height:24px;color:#a23b50;font-weight:700;-webkit-text-stroke:0.1px currentColor;left:-623.00px;width:1200px;text-align:right;">±1%</div><div class="t" style="top:1399.14px;font-size:24px;line-height:24px;color:#485656;letter-spacing:-0.45px;left:-198.00px;width:1200px;text-align:right;">1,577,942</div><div class="t" style="top:1399.14px;font-size:24px;line-height:24px;color:#5b8021;letter-spacing:-0.6px;left:-126.00px;width:1200px;text-align:right;">2%</div><div class="t" style="top:1399.14px;font-size:24px;line-height:24px;color:#485656;letter-spacing:-0.45px;left:257.60px;width:1200px;text-align:right;">16,490,395</div><div class="t" style="top:1399.14px;font-size:24px;line-height:24px;color:#485656;letter-spacing:-0.45px;left:611.50px;width:1200px;text-align:right;">394</div><div class="t" style="top:1399.14px;font-size:24px;line-height:24px;color:#5b8021;letter-spacing:-0.6px;left:684.00px;width:1200px;text-align:right;">0%</div><div class="t" style="top:1399.14px;font-size:24px;line-height:24px;color:#485656;letter-spacing:-0.45px;left:1072.70px;width:1200px;text-align:right;">1,132.74</div><div class="t" style="top:1399.14px;font-size:24px;line-height:24px;color:#485656;letter-spacing:-0.45px;left:1553.00px;width:1200px;text-align:right;">1,365.78</div><div class="t" style="top:1399.14px;font-size:24px;line-height:24px;color:#485656;letter-spacing:-0.45px;left:2211.00px;width:1200px;text-align:right;">0.025%</div><div class="r" style="left:0.00px;top:1493.82px;width:3448.00px;height:2.00px;background:#ececec;"></div><div class="t" style="top:1455.12px;font-size:24px;line-height:24px;color:#485656;left:44.00px;"><span style="color:#2d6ca2">FR</span> France</div><div class="t" style="top:1455.12px;font-size:24px;line-height:24px;color:#a23b50;font-weight:700;-webkit-text-stroke:0.1px currentColor;left:-623.00px;width:1200px;text-align:right;">±2%</div><div class="t" style="top:1455.12px;font-size:24px;line-height:24px;color:#485656;letter-spacing:-0.45px;left:-198.00px;width:1200px;text-align:right;">1,253,391</div><div class="t" style="top:1455.12px;font-size:24px;line-height:24px;color:#5b8021;letter-spacing:-0.6px;left:-126.00px;width:1200px;text-align:right;">1%</div><div class="t" style="top:1455.12px;font-size:24px;line-height:24px;color:#485656;letter-spacing:-0.45px;left:257.60px;width:1200px;text-align:right;">1,315,455</div><div class="t" style="top:1455.12px;font-size:24px;line-height:24px;color:#485656;letter-spacing:-0.45px;left:611.50px;width:1200px;text-align:right;">66</div><div class="t" style="top:1455.12px;font-size:24px;line-height:24px;color:#5b8021;letter-spacing:-0.6px;left:684.00px;width:1200px;text-align:right;">0%</div><div class="t" style="top:1455.12px;font-size:24px;line-height:24px;color:#485656;letter-spacing:-0.45px;left:1072.70px;width:1200px;text-align:right;">14,728.57</div><div class="t" style="top:1455.12px;font-size:24px;line-height:24px;color:#485656;letter-spacing:-0.45px;left:1553.00px;width:1200px;text-align:right;">14,736.20</div><div class="t" style="top:1455.12px;font-size:24px;line-height:24px;color:#485656;letter-spacing:-0.45px;left:2211.00px;width:1200px;text-align:right;">0.005%</div><div class="r" style="left:0.00px;top:1549.80px;width:3448.00px;height:2.00px;background:#ececec;"></div><div class="t" style="top:1511.10px;font-size:24px;line-height:24px;color:#485656;left:44.00px;"><span style="color:#2d6ca2">DE</span> Germany</div><div class="t" style="top:1511.10px;font-size:24px;line-height:24px;color:#a23b50;font-weight:700;-webkit-text-stroke:0.1px currentColor;left:-623.00px;width:1200px;text-align:right;">±2%</div><div class="t" style="top:1511.10px;font-size:24px;line-height:24px;color:#485656;letter-spacing:-0.45px;left:-198.00px;width:1200px;text-align:right;">818,037</div><div class="t" style="top:1511.10px;font-size:24px;line-height:24px;color:#5b8021;letter-spacing:-0.6px;left:-126.00px;width:1200px;text-align:right;">1%</div><div class="t" style="top:1511.10px;font-size:24px;line-height:24px;color:#485656;letter-spacing:-0.45px;left:257.60px;width:1200px;text-align:right;">888,592</div><div class="t" style="top:1511.10px;font-size:24px;line-height:24px;color:#485656;letter-spacing:-0.45px;left:611.50px;width:1200px;text-align:right;">32</div><div class="t" style="top:1511.10px;font-size:24px;line-height:24px;color:#5b8021;letter-spacing:-0.6px;left:684.00px;width:1200px;text-align:right;">0%</div><div class="t" style="top:1511.10px;font-size:24px;line-height:24px;color:#485656;letter-spacing:-0.45px;left:1072.70px;width:1200px;text-align:right;">9,658.95</div><div class="t" style="top:1511.10px;font-size:24px;line-height:24px;color:#485656;letter-spacing:-0.45px;left:1553.00px;width:1200px;text-align:right;">9,662.94</div><div class="t" style="top:1511.10px;font-size:24px;line-height:24px;color:#485656;letter-spacing:-0.45px;left:2211.00px;width:1200px;text-align:right;">0.004%</div><div class="r" style="left:0.00px;top:1605.78px;width:3448.00px;height:2.00px;background:#ececec;"></div><div class="t" style="top:1567.08px;font-size:24px;line-height:24px;color:#485656;left:44.00px;"><span style="color:#2d6ca2">BE</span> Belgium</div><div class="t" style="top:1567.08px;font-size:24px;line-height:24px;color:#a23b50;font-weight:700;-webkit-text-stroke:0.1px currentColor;left:-623.00px;width:1200px;text-align:right;">±2%</div><div class="t" style="top:1567.08px;font-size:24px;line-height:24px;color:#485656;letter-spacing:-0.45px;left:-198.00px;width:1200px;text-align:right;">556,644</div><div class="t" style="top:1567.08px;font-size:24px;line-height:24px;color:#5b8021;letter-spacing:-0.6px;left:-126.00px;width:1200px;text-align:right;">1%</div><div class="t" style="top:1567.08px;font-size:24px;line-height:24px;color:#485656;letter-spacing:-0.45px;left:257.60px;width:1200px;text-align:right;">582,002</div><div class="t" style="top:1567.08px;font-size:24px;line-height:24px;color:#485656;letter-spacing:-0.45px;left:611.50px;width:1200px;text-align:right;">31</div><div class="t" style="top:1567.08px;font-size:24px;line-height:24px;color:#5b8021;letter-spacing:-0.6px;left:684.00px;width:1200px;text-align:right;">0%</div><div class="t" style="top:1567.08px;font-size:24px;line-height:24px;color:#485656;letter-spacing:-0.45px;left:1072.70px;width:1200px;text-align:right;">6,667.14</div><div class="t" style="top:1567.08px;font-size:24px;line-height:24px;color:#485656;letter-spacing:-0.45px;left:1553.00px;width:1200px;text-align:right;">6,667.51</div><div class="t" style="top:1567.08px;font-size:24px;line-height:24px;color:#485656;letter-spacing:-0.45px;left:2211.00px;width:1200px;text-align:right;">0.005%</div><div class="r" style="left:0.00px;top:1661.76px;width:3448.00px;height:2.00px;background:#ececec;"></div><div class="t" style="top:1623.06px;font-size:24px;line-height:24px;color:#485656;left:44.00px;"><span style="color:#2d6ca2">ES</span> Spain</div><div class="t" style="top:1623.06px;font-size:24px;line-height:24px;color:#a23b50;font-weight:700;-webkit-text-stroke:0.1px currentColor;left:-623.00px;width:1200px;text-align:right;">±2%</div><div class="t" style="top:1623.06px;font-size:24px;line-height:24px;color:#485656;letter-spacing:-0.45px;left:-198.00px;width:1200px;text-align:right;">505,674</div><div class="t" style="top:1623.06px;font-size:24px;line-height:24px;color:#5b8021;letter-spacing:-0.6px;left:-126.00px;width:1200px;text-align:right;">1%</div><div class="t" style="top:1623.06px;font-size:24px;line-height:24px;color:#485656;letter-spacing:-0.45px;left:257.60px;width:1200px;text-align:right;">722,981</div><div class="t" style="top:1623.06px;font-size:24px;line-height:24px;color:#485656;letter-spacing:-0.45px;left:611.50px;width:1200px;text-align:right;">553</div><div class="t" style="top:1623.06px;font-size:24px;line-height:24px;color:#5b8021;letter-spacing:-0.6px;left:684.00px;width:1200px;text-align:right;">0%</div><div class="t" style="top:1623.06px;font-size:24px;line-height:24px;color:#485656;letter-spacing:-0.45px;left:1072.70px;width:1200px;text-align:right;">2,402.74</div><div class="t" style="top:1623.06px;font-size:24px;line-height:24px;color:#485656;letter-spacing:-0.45px;left:1553.00px;width:1200px;text-align:right;">2,764.67</div><div class="t" style="top:1623.06px;font-size:24px;line-height:24px;color:#485656;letter-spacing:-0.45px;left:2211.00px;width:1200px;text-align:right;">0.109%</div><div class="r" style="left:0.00px;top:1717.74px;width:3448.00px;height:2.00px;background:#ececec;"></div><div class="t" style="top:1679.04px;font-size:24px;line-height:24px;color:#485656;left:44.00px;"><span style="color:#2d6ca2">(empty value)</span></div><div class="t" style="top:1679.04px;font-size:24px;line-height:24px;color:#a23b50;font-weight:700;-webkit-text-stroke:0.1px currentColor;left:-623.00px;width:1200px;text-align:right;">±4%</div><div class="t" style="top:1679.04px;font-size:24px;line-height:24px;color:#485656;letter-spacing:-0.45px;left:-198.00px;width:1200px;text-align:right;">211,193</div><div class="t" style="top:1679.04px;font-size:24px;line-height:24px;color:#5b8021;letter-spacing:-0.6px;left:-126.00px;width:1200px;text-align:right;">0%</div><div class="t" style="top:1679.04px;font-size:24px;line-height:24px;color:#485656;letter-spacing:-0.45px;left:257.60px;width:1200px;text-align:right;">817,215</div><div class="t" style="top:1679.04px;font-size:24px;line-height:24px;color:#485656;letter-spacing:-0.45px;left:611.50px;width:1200px;text-align:right;">2,853</div><div class="t" style="top:1679.04px;font-size:24px;line-height:24px;color:#5b8021;letter-spacing:-0.6px;left:684.00px;width:1200px;text-align:right;">0%</div><div class="t" style="top:1679.04px;font-size:24px;line-height:24px;color:#485656;letter-spacing:-0.45px;left:1072.70px;width:1200px;text-align:right;">169.10</div><div class="t" style="top:1679.04px;font-size:24px;line-height:24px;color:#485656;letter-spacing:-0.45px;left:1553.00px;width:1200px;text-align:right;">233.88</div><div class="t" style="top:1679.04px;font-size:24px;line-height:24px;color:#485656;letter-spacing:-0.45px;left:2211.00px;width:1200px;text-align:right;">1.351%</div><div class="r" style="left:0.00px;top:1773.72px;width:3448.00px;height:2.00px;background:#ececec;"></div><div class="t" style="top:1735.02px;font-size:24px;line-height:24px;color:#485656;left:44.00px;"><span style="color:#2d6ca2">MX</span> Mexico</div><div class="t" style="top:1735.02px;font-size:24px;line-height:24px;color:#a23b50;font-weight:700;-webkit-text-stroke:0.1px currentColor;left:-623.00px;width:1200px;text-align:right;">±4%</div><div class="t" style="top:1735.02px;font-size:24px;line-height:24px;color:#485656;letter-spacing:-0.45px;left:-198.00px;width:1200px;text-align:right;">200,401</div><div class="t" style="top:1735.02px;font-size:24px;line-height:24px;color:#5b8021;letter-spacing:-0.6px;left:-126.00px;width:1200px;text-align:right;">0%</div><div class="t" style="top:1735.02px;font-size:24px;line-height:24px;color:#485656;letter-spacing:-0.45px;left:257.60px;width:1200px;text-align:right;">243,100</div><div class="t" style="top:1735.02px;font-size:24px;line-height:24px;color:#485656;letter-spacing:-0.45px;left:611.50px;width:1200px;text-align:right;">3,013</div><div class="t" style="top:1735.02px;font-size:24px;line-height:24px;color:#5b8021;letter-spacing:-0.6px;left:684.00px;width:1200px;text-align:right;">0%</div><div class="t" style="top:1735.02px;font-size:24px;line-height:24px;color:#485656;letter-spacing:-0.45px;left:1072.70px;width:1200px;text-align:right;">161.53</div><div class="t" style="top:1735.02px;font-size:24px;line-height:24px;color:#485656;letter-spacing:-0.45px;left:1553.00px;width:1200px;text-align:right;">218.00</div><div class="t" style="top:1735.02px;font-size:24px;line-height:24px;color:#485656;letter-spacing:-0.45px;left:2211.00px;width:1200px;text-align:right;">1.504%</div><div class="r" style="left:0.00px;top:1829.70px;width:3448.00px;height:2.00px;background:#ececec;"></div><div class="t" style="top:1791.00px;font-size:24px;line-height:24px;color:#485656;left:44.00px;"><span style="color:#2d6ca2">AU</span> Australia</div><div class="t" style="top:1791.00px;font-size:24px;line-height:24px;color:#a23b50;font-weight:700;-webkit-text-stroke:0.1px currentColor;left:-623.00px;width:1200px;text-align:right;">±4%</div><div class="t" style="top:1791.00px;font-size:24px;line-height:24px;color:#485656;letter-spacing:-0.45px;left:-198.00px;width:1200px;text-align:right;">154,157</div><div class="t" style="top:1791.00px;font-size:24px;line-height:24px;color:#5b8021;letter-spacing:-0.6px;left:-126.00px;width:1200px;text-align:right;">0%</div><div class="t" style="top:1791.00px;font-size:24px;line-height:24px;color:#485656;letter-spacing:-0.45px;left:257.60px;width:1200px;text-align:right;">311,924</div><div class="t" style="top:1791.00px;font-size:24px;line-height:24px;color:#485656;letter-spacing:-0.45px;left:611.50px;width:1200px;text-align:right;">1,815</div><div class="t" style="top:1791.00px;font-size:24px;line-height:24px;color:#5b8021;letter-spacing:-0.6px;left:684.00px;width:1200px;text-align:right;">0%</div><div class="t" style="top:1791.00px;font-size:24px;line-height:24px;color:#485656;letter-spacing:-0.45px;left:1072.70px;width:1200px;text-align:right;">89.43</div><div class="t" style="top:1791.00px;font-size:24px;line-height:24px;color:#485656;letter-spacing:-0.45px;left:1553.00px;width:1200px;text-align:right;">126.89</div><div class="t" style="top:1791.00px;font-size:24px;line-height:24px;color:#485656;letter-spacing:-0.45px;left:2211.00px;width:1200px;text-align:right;">1.177%</div><div class="r" style="left:0.00px;top:1831.00px;width:3448.00px;height:9.00px;background:#f3f3f3;"></div>
</body></html>
